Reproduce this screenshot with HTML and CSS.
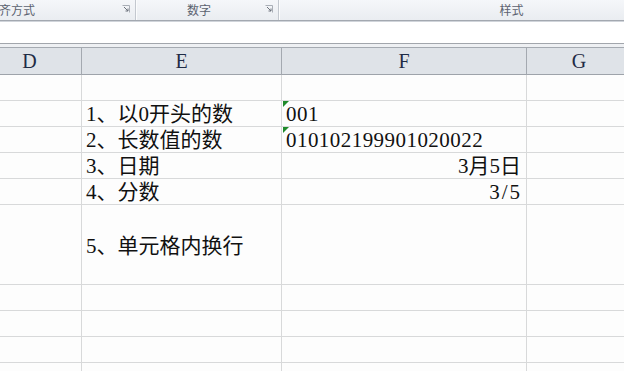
FILE: index.html
```html
<!DOCTYPE html>
<html lang="zh-CN">
<head>
<meta charset="utf-8">
<link rel="stylesheet" href="styles.css">
</head>
<body>
<div class="ribbon">
  <div class="group g-align"><span class="glabel">齐方式</span><span class="launcher"><svg width="8" height="8" viewBox="0 0 8 8"><path d="M0.5 0.5H7.5V7.5" fill="none" stroke="#a9aeb6"/><path d="M2 2L6 6M3.5 6H6V3.5" fill="none" stroke="#6d737c"/></svg></span></div>
  <div class="group g-num"><span class="glabel">数字</span><span class="launcher"><svg width="8" height="8" viewBox="0 0 8 8"><path d="M0.5 0.5H7.5V7.5" fill="none" stroke="#a9aeb6"/><path d="M2 2L6 6M3.5 6H6V3.5" fill="none" stroke="#6d737c"/></svg></span></div>
  <div class="group g-style"><span class="glabel">样式</span></div>
</div>
<div class="formula"></div>
<div class="gap"></div>
<div class="sheet">
  <div class="hd hd-d">D</div><div class="hd">E</div><div class="hd">F</div><div class="hd hd-g">G</div>

  <div class="c"></div><div class="c"></div><div class="c"></div><div class="c"></div>

  <div class="c"></div><div class="c">1、以0开头的数</div><div class="c txt num">001</div><div class="c"></div>

  <div class="c"></div><div class="c">2、长数值的数</div><div class="c txt num">010102199901020022</div><div class="c"></div>

  <div class="c"></div><div class="c">3、日期</div><div class="c r">3月5日</div><div class="c"></div>

  <div class="c"></div><div class="c">4、分数</div><div class="c r frac">3/5</div><div class="c"></div>

  <div class="c"></div><div class="c mid">5、单元格内换行</div><div class="c"></div><div class="c"></div>

  <div class="c"></div><div class="c"></div><div class="c"></div><div class="c"></div>
  <div class="c"></div><div class="c"></div><div class="c"></div><div class="c"></div>
  <div class="c"></div><div class="c"></div><div class="c"></div><div class="c"></div>
  <div class="c"></div><div class="c"></div><div class="c"></div><div class="c"></div>
</div>
</body>
</html>
```
FILE: styles.css
```css
* { box-sizing: border-box; }
html, body { margin: 0; padding: 0; }
body {
  width: 624px;
  height: 371px;
  overflow: hidden;
  background: #fdfdfd;
  font-family: "Liberation Serif", "Noto Sans CJK SC", serif;
}
.ribbon {
  display: flex;
  height: 22px;
  background: linear-gradient(#f5f7fa, #e9ecf0);
  border-bottom: 1px solid #d0d4da;
  box-shadow: inset 0 -1px 0 #a3a8b0;
  font-family: "Noto Sans CJK SC", "Noto Sans", sans-serif;
  font-size: 12px;
  color: #5b6270;
}
.group {
  position: relative;
  height: 20px;
  display: flex;
  align-items: center;
  border-right: 1px solid #c3c8cf;
  box-shadow: 1px 0 0 #fbfcfd;
}
.g-align { width: 136px; }
.g-align .glabel { margin-left: -1px; }
.g-num { width: 143px; justify-content: center; padding-right: 16px; }
.g-style { flex: 1; justify-content: center; padding-left: 120px; border-right: none; box-shadow: none; }
.glabel { line-height: 20px; }
.launcher {
  position: absolute;
  right: 5px;
  top: 5px;
  width: 8px;
  height: 8px;
  display: flex;
}
.formula {
  height: 22px;
  background: #ffffff;
  border-bottom: 1px solid #a2a6ac;
}
.gap {
  height: 3px;
  background: #eef0f3;
}
.sheet {
  display: grid;
  grid-template-columns: 82px 200px 245px 1fr;
  grid-template-rows: 28px repeat(5, 26px) 80px repeat(4, 26px);
}
.hd {
  background: #dfe3e8;
  border-top: 1px solid #a5aab1;
  border-bottom: 1px solid #9ea3aa;
  border-right: 1px solid #a4a9b0;
  display: flex;
  align-items: center;
  justify-content: center;
  font-size: 20px;
  color: #1f2b45;
  padding-top: 1px;
}
.hd-d { padding-right: 22px; }
.hd-g { border-right: none; padding-left: 7px; }
.c {
  border-right: 1px solid #d8d9da;
  border-bottom: 1px solid #d8d9da;
  font-size: 21px;
  color: #111;
  line-height: 22px;
  display: flex;
  align-items: flex-end;
  padding: 0 5px 1px 4px;
  white-space: nowrap;
  position: relative;
}
.c:nth-child(4n) { border-right: none; }
.r { justify-content: flex-end; }
.num { letter-spacing: 0.45px; }
.frac { letter-spacing: 2px; padding-right: 4px; }
.txt::before {
  content: "";
  position: absolute;
  left: 1px;
  top: 0;
  border-top: 6px solid #1f8a2b;
  border-right: 6px solid transparent;
}
.mid { align-items: center; padding-top: 3px; padding-bottom: 0; }
```
